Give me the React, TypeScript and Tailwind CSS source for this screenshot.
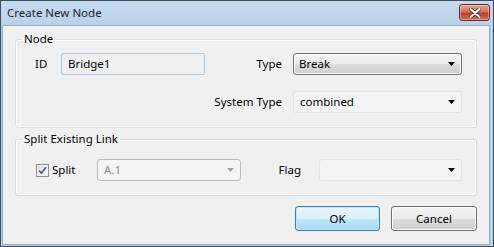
import React from 'react';

// small black/gray triangle used in the combo boxes
function Arrow({ gray = false }: { gray?: boolean }) {
  return (
    <svg width="7" height="4" viewBox="0 0 7 4" className="shrink-0">
      <path d="M0 0H7L3.5 4Z" fill={gray ? '#a0a0a0' : '#000000'} />
    </svg>
  );
}

function Combo({ value, width, variant }: { value: string; width: string; variant: 'active' | 'flat' | 'disabled' }) {
  const box =
    variant === 'active'
      ? 'border-[#707070] bg-[linear-gradient(#f2f2f2_0%,#ebebeb_50%,#dddddd_51%,#cfcfcf_100%)] shadow-[inset_0_0_0_1px_#fcfcfc] pl-[5px]'
      : variant === 'disabled'
        ? 'border-[#bcbcbc] bg-[#f4f4f4] text-[#8d8d8d] pl-[6px]'
        : 'border-[#e3e3e3] bg-[#f4f4f4] pl-[6px]';
  return (
    <div className={`${width} h-[22px] flex items-center justify-between rounded-[3px] border pr-[6px] ${box}`}>
      <span className="leading-none">{value}</span>
      <Arrow gray={variant === 'disabled'} />
    </div>
  );
}

export default function App() {
  return (
    <div
      className="w-[494px] h-[247px] border border-[#3f4b58] bg-[#b9d1ea] flex flex-col text-[11.5px] text-black"
      style={{ fontFamily: '"Noto Sans", "Open Sans", sans-serif' }}
    >
      {/* title bar */}
      <div className="h-[24px] flex items-start justify-between bg-[linear-gradient(#c4daf1,#b9d1ea)] pl-[6px] pr-[3px]">
        <span className="mt-[4px] leading-[16px] text-[#1e1e1e]">Create New Node</span>
        <div className="mt-[3px] w-[31px] h-[17px] rounded-[3px] border border-[#6b2a2a] bg-[linear-gradient(#e6a394_0%,#d5705d_45%,#c0412b_55%,#d2694e_100%)] flex items-center justify-center shadow-[inset_0_0_0_1px_rgba(255,255,255,0.35)]">
          <svg width="12" height="10" viewBox="0 0 12 10">
            <path d="M1.5 1L10.5 9M10.5 1L1.5 9" stroke="#3b2a2a" strokeWidth="3.6" strokeLinecap="round" />
            <path d="M1.5 1L10.5 9M10.5 1L1.5 9" stroke="#ffffff" strokeWidth="2.2" strokeLinecap="round" />
          </svg>
        </div>
      </div>

      {/* client area */}
      <div className="flex-1 ml-[1px] mr-[3px] mb-[1px] bg-[#f0f0f0] border border-[#95aac4] px-[12px] pt-[5px] flex flex-col">
        <fieldset className="rounded-[3px] border border-[#d5dfe5] shadow-[inset_0_0_0_1px_#ffffff]">
          <legend className="ml-[6px] px-[2px] leading-[16px]">Node</legend>
          <div className="pl-[19px] pr-[14px] pt-[6px] pb-[14px]">
            <div className="flex items-center">
              <span className="w-[26px]">ID</span>
              <div className="w-[144px] h-[22px] flex items-center rounded-[2px] border border-[#a9c9e6] bg-[#f0f0f0] pl-[6px]">
                Bridge1
              </div>
              <div className="flex-1" />
              <span>Type</span>
              <div className="ml-[11px]">
                <Combo value="Break" width="w-[169px]" variant="active" />
              </div>
            </div>
            <div className="flex items-center justify-end mt-[16px]">
              <span>System Type</span>
              <div className="ml-[11px]">
                <Combo value="combined" width="w-[169px]" variant="flat" />
              </div>
            </div>
          </div>
        </fieldset>

        <fieldset className="mt-[3px] rounded-[3px] border border-[#d5dfe5] shadow-[inset_0_0_0_1px_#ffffff]">
          <legend className="ml-[6px] px-[2px] leading-[16px]">Split Existing Link</legend>
          <div className="pl-[20px] pr-[14px] pt-[12px] pb-[14px] flex items-center">
            <div className="w-[13px] h-[13px] border border-[#8f8f8f] bg-[linear-gradient(135deg,#dcdcdc,#ffffff)] flex items-center justify-center shadow-[inset_0_0_0_1px_#f4f4f4]">
              <svg width="9" height="9" viewBox="0 0 9 9">
                <path d="M1 4.5L3.5 7.2L8 1.2" fill="none" stroke="#4a5f97" strokeWidth="1.8" />
              </svg>
            </div>
            <span className="ml-[3px] w-[45px]">Split</span>
            <Combo value="A.1" width="w-[144px]" variant="disabled" />
            <div className="flex-1" />
            <span>Flag</span>
            <div className="ml-[18px]">
              <Combo value="" width="w-[143px]" variant="flat" />
            </div>
          </div>
        </fieldset>

        <div className="flex justify-end gap-[11px] mt-[10px]">
          <button className="w-[85px] h-[25px] rounded-[3px] border border-[#3c7fb1] bg-[linear-gradient(#eaf6fd_0%,#d9f0fc_50%,#bee6fd_51%,#a7d9f5_100%)] shadow-[inset_0_0_0_1px_#bfe6f8]">
            OK
          </button>
          <button className="w-[86px] h-[25px] rounded-[3px] border border-[#707070] bg-[linear-gradient(#f2f2f2_0%,#ebebeb_50%,#dddddd_51%,#cfcfcf_100%)] shadow-[inset_0_0_0_1px_#fcfcfc]">
            Cancel
          </button>
        </div>
      </div>
    </div>
  );
}
